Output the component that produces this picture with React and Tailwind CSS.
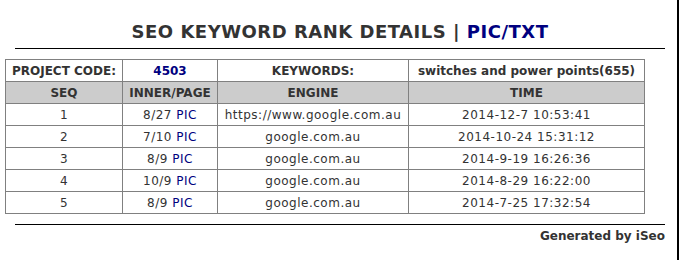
export default function App() {
  const rows = [
    ["1", "8/27", "https://www.google.com.au", "2014-12-7 10:53:41"],
    ["2", "7/10", "google.com.au", "2014-10-24 15:31:12"],
    ["3", "8/9", "google.com.au", "2014-9-19 16:26:36"],
    ["4", "10/9", "google.com.au", "2014-8-29 16:22:00"],
    ["5", "8/9", "google.com.au", "2014-7-25 17:32:54"],
  ];
  const td = "border border-[#808080] h-[22px] p-0 text-center align-middle";
  return (
    <div
      className="relative w-[681px] h-[260px] bg-white text-[#333333] overflow-hidden"
      style={{ fontFamily: '"DejaVu Sans", Verdana, sans-serif' }}
    >
      <div className="absolute right-[2px] top-0 h-[260px] w-[2px] bg-black" />
      <div className="ml-[15px] w-[650px] pt-[22px] pb-[6px] border-b border-black text-center text-[18px] leading-[20px] tracking-[0.5px] font-bold">
        SEO KEYWORD RANK DETAILS | <span className="text-[#000080]">PIC/TXT</span>
      </div>
      <table className="ml-[5px] mt-[10px] w-[639px] table-fixed border-collapse border border-[#333333] text-[12px] leading-[14px]">
        <colgroup>
          <col className="w-[117px]" />
          <col className="w-[95px]" />
          <col className="w-[191px]" />
          <col className="w-[236px]" />
        </colgroup>
        <tbody>
          <tr className="font-bold">
            <td className={td}>PROJECT CODE:</td>
            <td className={td + " text-[#000080]"}>4503</td>
            <td className={td}>KEYWORDS:</td>
            <td className={td}>switches and power points(655)</td>
          </tr>
          <tr className="font-bold bg-[#cccccc]">
            <td className={td}>SEQ</td>
            <td className={td}>INNER/PAGE</td>
            <td className={td}>ENGINE</td>
            <td className={td}>TIME</td>
          </tr>
          {rows.map((r) => (
            <tr key={r[0]} className="tracking-[0.5px]">
              <td className={td}>{r[0]}</td>
              <td className={td}>
                {r[1]} <span className="text-[#000080]">PIC</span>
              </td>
              <td className={td}>{r[2]}</td>
              <td className={td}>{r[3]}</td>
            </tr>
          ))}
        </tbody>
      </table>
      <div className="ml-[15px] mt-[10px] w-[650px] border-t border-black pt-[4px] text-right text-[12px] leading-[14px] font-bold">
        Generated by iSeo
      </div>
    </div>
  );
}
